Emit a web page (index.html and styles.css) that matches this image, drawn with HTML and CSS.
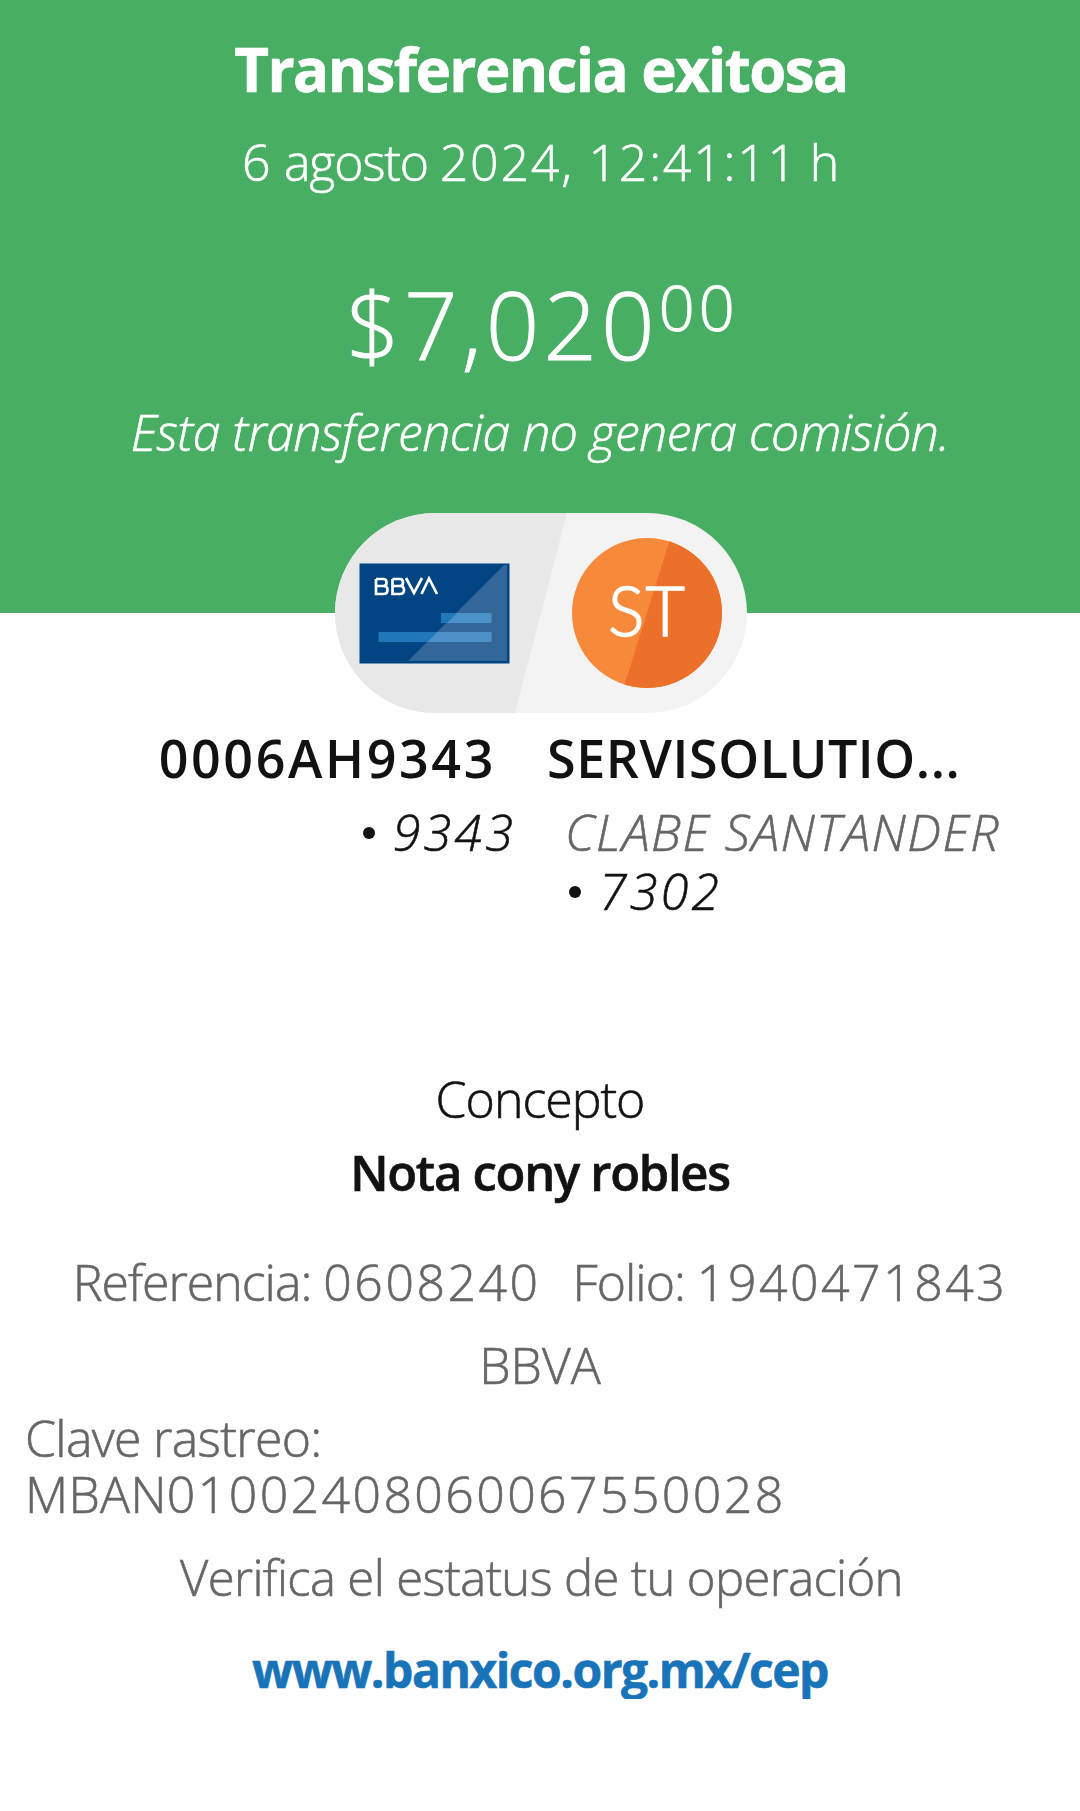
FILE: index.html
```html
<!DOCTYPE html>
<html lang="es">
<head>
<meta charset="utf-8">
<title>Transferencia exitosa</title>
<link rel="stylesheet" href="styles.css">
</head>
<body>
<header class="hero">
  <h1 class="title">Transferencia exitosa</h1>
  <p class="date"><span class="num">6</span> agosto <span class="num">2024, 12:41:11</span> h</p>
  <p class="amount"><span class="whole">$7,020</span><span class="cents">00</span></p>
  <p class="fee">Esta transferencia no genera comisión.</p>
  <svg class="pill" viewBox="0 0 412 200" width="412" height="200" role="img" aria-label="BBVA a ST">
    <defs>
      <clipPath id="pill-shape"><rect width="412" height="200" rx="100"/></clipPath>
      <clipPath id="badge-shape"><circle cx="312" cy="100" r="75"/></clipPath>
    </defs>
    <g clip-path="url(#pill-shape)">
      <rect width="412" height="200" fill="#f3f3f3"/>
      <path d="M0 0H232L180 200H0Z" fill="#e8e8e8"/>
    </g>
    <rect x="24.500" y="50.500" width="150" height="100" fill="#004481"/>
    <path d="M169 52H172V148H73Z" fill="#336799"/>
    <rect x="43.500" y="119" width="113" height="10" fill="#2078bb"/>
    <rect x="106" y="100" width="50.500" height="10" fill="#2078bb"/>
    <path d="M102.500 119H156.500V129H92.500Z M122 100H156.500V110H112Z" fill="#4c92c8"/>
    <g fill="none" stroke="#fff" stroke-width="2.700">
      <path d="M41 66V81H48.500Q52.500 81 52.500 77T48.500 73H41M48.500 73Q51.500 73 51.500 69.500T48.500 66H41"/>
      <path d="M57.500 66V81H65Q69 81 69 77T65 73H57.500M65 73Q68 73 68 69.500T65 66H57.500"/>
      <path d="M71 65L79 80L87 65M86.500 81L94 65.500L102 81"/>
    </g>
    <g clip-path="url(#badge-shape)">
      <rect x="237" y="25" width="150" height="150" fill="#f7893b"/>
      <path d="M337 20H390V180H287Z" fill="#ec7029"/>
    </g>
    <text class="initials" x="312" y="123" text-anchor="middle">ST</text>
  </svg>
</header>
<main>
  <section class="accounts">
    <div class="origin">
      <p class="name">0006AH9343</p>
      <p class="number"><i class="dot"></i>9343</p>
    </div>
    <div class="target">
      <p class="name">SERVISOLUTIO...</p>
      <p class="bank">CLABE SANTANDER</p>
      <p class="number"><i class="dot"></i>7302</p>
    </div>
  </section>
  <section class="concept">
    <p class="label">Concepto</p>
    <p class="value">Nota cony robles</p>
  </section>
  <section class="details">
    <p class="refs"><span>Referencia: <span class="num">0608240</span></span><span>Folio: <span class="num">1940471843</span></span></p>
    <p class="issuer">BBVA</p>
    <p class="tracking">Clave rastreo:<br><span class="key">MBAN<span class="num">01002408060067550028</span></span></p>
    <p class="verify">Verifica el estatus de tu operación</p>
    <p class="link">www.banxico.org.mx/cep</p>
  </section>
</main>
</body>
</html>
```
FILE: styles.css
```css
* { box-sizing: border-box; }
body {
  margin: 0;
  background: #fefefe;
  color: #121212;
  font-family: "Open Sans", "Noto Sans", sans-serif;
  font-size: 50px;
  font-weight: 300;
  line-height: 58px;
  -webkit-text-stroke: 0.600px currentColor;
}
h1, p { margin: 0; white-space: nowrap; }
.num { letter-spacing: 2.500px; }
.hero {
  position: relative;
  height: 613px;
  padding-top: 33px;
  background: #48ae64;
  color: #fff;
  text-align: center;
}
.title { padding-left: 2px; font-size: 60px; font-weight: 700; line-height: 72px; letter-spacing: -1.600px; }
.date { margin-top: 28px; letter-spacing: -1.200px; }
.date .num { letter-spacing: 1.800px; }
.amount {
  display: flex;
  justify-content: center;
  margin-top: 78px;
  padding-left: 5px;
  font-size: 94px;
  line-height: 110px;
  letter-spacing: 4px;
  -webkit-text-stroke-width: 1px;
}
.cents { font-size: 63px; line-height: 75px; letter-spacing: 4px; }
.fee { margin-top: 24px; font-style: italic; letter-spacing: -0.550px; }
.pill { position: absolute; left: 334.500px; bottom: -100px; }
.initials {
  font-family: Lato, sans-serif;
  font-size: 68px;
  font-weight: 300;
  letter-spacing: 1px;
  fill: #fff;
  stroke: #fff;
  stroke-width: 1.500px;
}
.accounts {
  display: grid;
  grid-template-columns: 514px 1fr;
  column-gap: 33px;
  padding-top: 115px;
}
.name { font-size: 52px; font-weight: 600; line-height: 60px; margin-bottom: 15px; letter-spacing: 0.600px; -webkit-text-stroke-width: 0; }
.origin { display: flex; flex-direction: column; align-items: flex-end; }
.origin .name { padding-right: 18px; letter-spacing: 2.600px; }
.number { display: flex; align-items: center; font-style: italic; line-height: 59px; letter-spacing: 3.300px; }
.origin .number { margin-right: -2px; }
.bank { padding-left: 18px; color: #666; font-style: italic; line-height: 59px; letter-spacing: 1.500px; }
.target .number { padding-left: 22px; }
.dot { width: 12px; height: 12px; margin-right: 18px; border-radius: 50%; background: #121212; }
.concept { padding-top: 149px; text-align: center; }
.label { letter-spacing: -1px; }
.value { margin-top: 15px; font-size: 49px; font-weight: 600; letter-spacing: -1.300px; }
.details { padding-top: 52px; color: #666; text-align: center; letter-spacing: -1px; }
.refs { display: flex; justify-content: center; gap: 32px; }
.issuer { margin-top: 25px; letter-spacing: 0; }
.tracking { margin-top: 16px; padding-left: 25px; line-height: 56px; text-align: left; letter-spacing: -0.700px; }
.key { letter-spacing: 0.300px; }
.key .num { letter-spacing: 2.400px; }
.verify { margin-top: 26px; padding-left: 3px; font-size: 49px; letter-spacing: -0.650px; }
.link { margin-top: 35px; color: #1973b8; font-size: 48px; font-weight: 700; letter-spacing: -1.500px; }
```
